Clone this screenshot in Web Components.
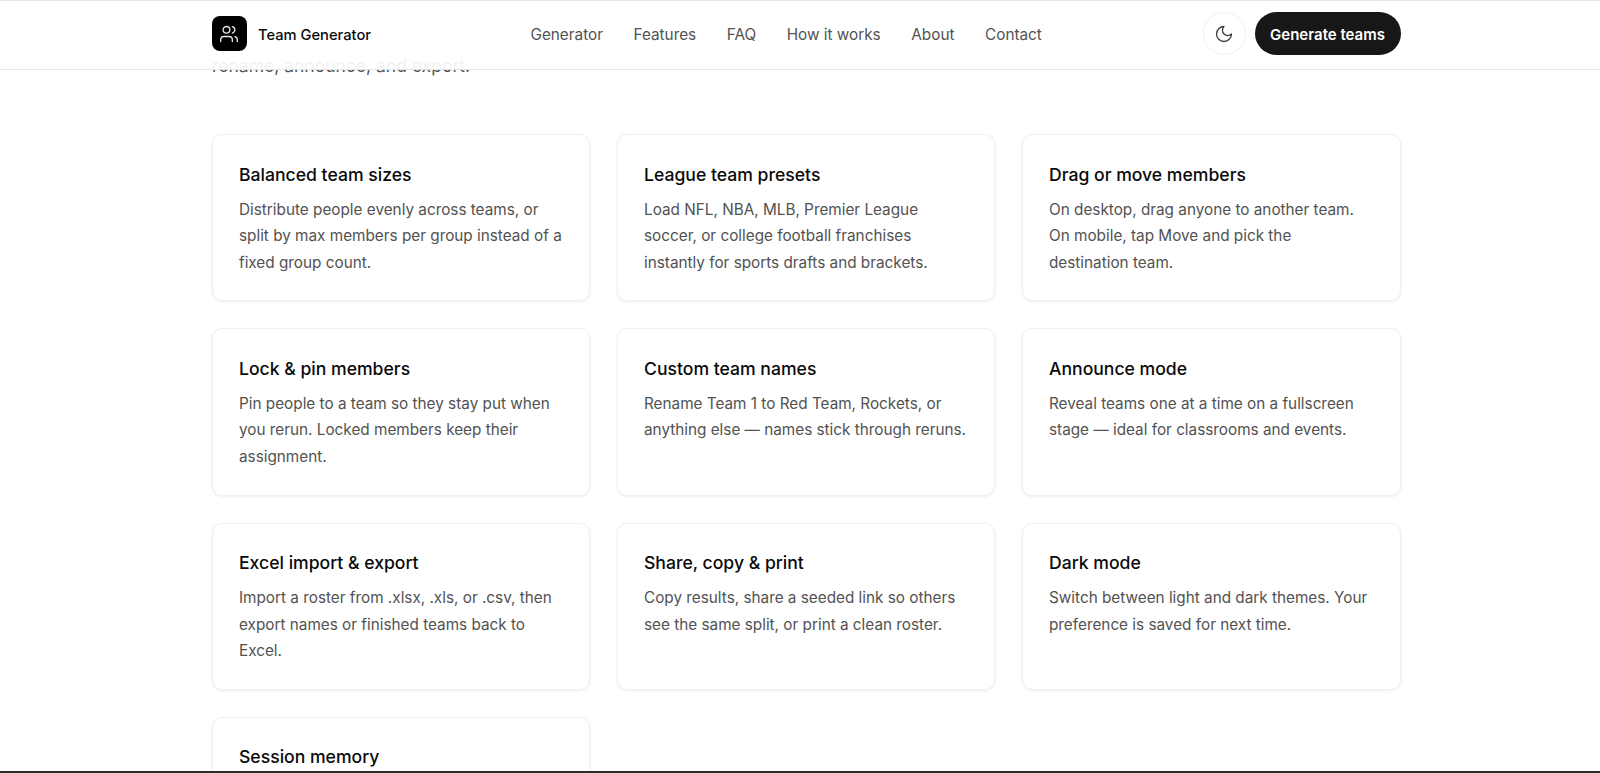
<!DOCTYPE html>
<html><head><meta charset="utf-8"><style>
html,body{margin:0;padding:0;height:773px;overflow:hidden;background:#fff;font-family:Inter,sans-serif}
</style></head><body>
<tg-page>
<tg-header></tg-header>
<tg-features>
<tg-card title="Balanced team sizes">Distribute people evenly across teams, or split by max members per group instead of a fixed group count.</tg-card>
<tg-card title="League team presets">Load NFL, NBA, MLB, Premier League soccer, or college football franchises instantly for sports drafts and brackets.</tg-card>
<tg-card title="Drag or move members">On desktop, drag anyone to another team. On mobile, tap Move and pick the destination team.</tg-card>
<tg-card title="Lock &amp; pin members">Pin people to a team so they stay put when you rerun. Locked members keep their assignment.</tg-card>
<tg-card title="Custom team names">Rename Team 1 to Red Team, Rockets, or anything else — names stick through reruns.</tg-card>
<tg-card title="Announce mode">Reveal teams one at a time on a fullscreen stage — ideal for classrooms and events.</tg-card>
<tg-card title="Excel import &amp; export">Import a roster from .xlsx, .xls, or .csv, then export names or finished teams back to Excel.</tg-card>
<tg-card title="Share, copy &amp; print">Copy results, share a seeded link so others see the same split, or print a clean roster.</tg-card>
<tg-card title="Dark mode">Switch between light and dark themes. Your preference is saved for next time.</tg-card>
<tg-card title="Session memory"></tg-card>
</tg-features>
</tg-page>
<script>
function def(n,html){customElements.define(n,class extends HTMLElement{constructor(){super();this.attachShadow({mode:'open'}).innerHTML=html;}})}
def('tg-page',`<style>:host{display:block;height:773px;box-sizing:border-box;overflow:hidden;border-top:1px solid #e5e5e5;border-bottom:2px solid #2b2b2b;position:relative;background:#fff}</style><slot></slot>`);
def('tg-header',`<style>
:host{display:block;position:absolute;z-index:2;top:0;left:0;right:0;height:69px;box-sizing:border-box;padding-bottom:3px;border-bottom:1px solid #e5e5e5;background:rgba(255,255,255,.92)}
.in{margin-left:212px;width:1188.5px;height:100%;display:flex;align-items:center}
.brand{display:flex;align-items:center;gap:11.5px;font:500 14.7px Inter,sans-serif;color:#0a0a0a;width:318.5px}
.brand b{font-weight:500;padding-top:2px}
.logo{width:34.5px;height:34.5px;border-radius:8px;background:#000;display:flex;align-items:center;justify-content:center}
nav{display:flex;gap:30.6px;padding-top:2px;font:400 15.3px Inter,sans-serif;color:#525252}
.act{display:flex;align-items:center;gap:9px;margin-left:auto}
.tog{width:43px;height:43px;box-sizing:border-box;border:1px solid #f0f0f0;border-radius:50%;display:flex;align-items:center;justify-content:center}
.btn{height:43px;width:146px;box-sizing:border-box;padding-top:2px;border-radius:22px;background:#171717;color:#fff;font:600 15px Inter,sans-serif;display:flex;align-items:center;justify-content:center}
</style><div class="in"><div class="brand"><span class="logo"><svg width="20" height="20" viewBox="0 0 24 24" fill="none" stroke="#e5e5e5" stroke-width="1.6" stroke-linecap="round" stroke-linejoin="round"><path d="M16 21v-2a4 4 0 0 0-4-4H6a4 4 0 0 0-4 4v2"/><circle cx="9" cy="7" r="4"/><path d="M22 21v-2a4 4 0 0 0-3-3.87"/><path d="M16 3.13a4 4 0 0 1 0 7.75"/></svg></span><b>Team Generator</b></div>
<nav><span>Generator</span><span>Features</span><span>FAQ</span><span>How it works</span><span>About</span><span>Contact</span></nav>
<div class="act"><span class="tog"><svg width="20" height="20" viewBox="0 0 24 24" fill="none" stroke="#404040" stroke-width="1.6" stroke-linecap="round" stroke-linejoin="round"><path d="M12 3a6 6 0 0 0 9 9 9 9 0 1 1-9-9Z"/></svg></span><span class="btn">Generate teams</span></div></div>`);
def('tg-features',`<style>
:host{display:block;width:1188.5px;margin-left:212px}
.intro{font:400 17.5px/28px Inter,sans-serif;color:#525252;padding-top:51px;height:82px}
.grid{display:grid;grid-template-columns:378px 378px 1fr;gap:27px}
</style><div class="intro">rename, announce, and export.</div><div class="grid"><slot></slot></div>`);
customElements.define('tg-card',class extends HTMLElement{constructor(){super();this.attachShadow({mode:'open'}).innerHTML=`<style>
:host{display:block;height:167.3px;box-sizing:border-box;border:1px solid #f0f0f0;border-radius:10px;padding:26.5px 26px 26px;background:#fff;box-shadow:0 1px 3px rgba(0,0,0,.07)}
h3{margin:0 0 9px;font:500 17.6px/26px Inter,sans-serif;color:#0a0a0a}
p{margin:0;font:400 15.3px/26.5px Inter,sans-serif;color:#525252}
</style><h3></h3><p><slot></slot></p>`;}
connectedCallback(){this.shadowRoot.querySelector('h3').textContent=this.getAttribute('title')}});
</script>
</body></html>
